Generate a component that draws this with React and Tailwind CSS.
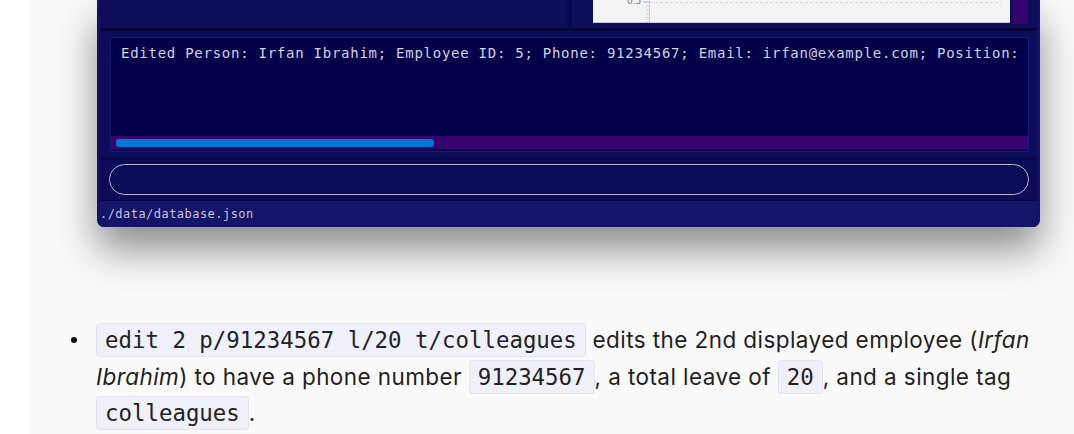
import React from "react";

function Chart() {
  const ticks = [6, 10, 14, 18, 22];
  return (
    <svg width="417" height="23" viewBox="0 0 417 23" className="block">
      <rect x="0" y="0" width="417" height="23" fill="#f4f4f4" />
      <text x="34" y="4" fontSize="9" fill="#777" fontFamily="DejaVu Sans, sans-serif">0.5</text>
      <line x1="50" y1="2" x2="56" y2="2" stroke="#aaa" strokeWidth="1" />
      {ticks.map((t) => (
        <line key={t} x1="53" y1={t} x2="56" y2={t} stroke="#ccc" strokeWidth="1" />
      ))}
      <line x1="56.5" y1="0" x2="56.5" y2="23" stroke="#ccc" strokeWidth="1" />
      <line x1="57" y1="2.5" x2="408" y2="2.5" stroke="#d6d6d6" strokeWidth="1" strokeDasharray="3 2" />
      <line x1="0" y1="22.5" x2="417" y2="22.5" stroke="#c8c8e0" strokeWidth="1" />
    </svg>
  );
}

function Code({ children }) {
  return (
    <code className="font-['DejaVu_Sans_Mono',monospace] text-[22.4px] leading-none tracking-normal bg-[#f0f0fb] border border-[#e3e3ef] rounded-[4px] px-[8px] py-[3px] text-[#222]">
      {children}
    </code>
  );
}

export default function App() {
  return (
    <div className="w-[1074px] h-[434px] overflow-hidden bg-white flex">
      <div className="w-[29px] shrink-0 bg-white" />
      <div className="flex-1 bg-[#fafafa] flex flex-col">
        {/* App window */}
        <div className="ml-[68px] w-[943px] h-[227px] bg-[#121264] px-[3px] rounded-b-[7px] shadow-[0_22px_40px_rgba(0,0,0,0.45)] flex flex-col overflow-hidden">
          {/* top panels */}
          <div className="h-[28px] flex bg-[#0d0d5c]">
            <div className="w-[467px] bg-[#0d0d5c]" />
            <div className="w-[5px] bg-[#08084a]" />
            <div className="flex-1 flex pl-[21px]">
              <div className="h-[23px]">
                <Chart />
              </div>
              <div className="ml-[3px] w-[15px] h-[24px] bg-[#36036f]" />
            </div>
          </div>
          <div className="h-[3px] bg-[#06063f]" />
          {/* result display */}
          <div className="h-[126px] bg-[#0c0c5a] pt-[6px] pl-[10px] pr-[8px]">
            <div className="h-[115px] border border-[#18187a] bg-[#03004a] flex flex-col">
              <div className="flex-1 pl-[10px] pt-[5px] overflow-hidden whitespace-nowrap font-['DejaVu_Sans_Mono',monospace] text-[14px] leading-[20px] tracking-[0.74px] text-[#d2d2e2]">
                Edited Person: Irfan Ibrahim; Employee ID: 5; Phone: 91234567; Email: irfan@example.com; Position:
              </div>
              <div className="h-[13px] mb-[2px] bg-[#36036f] pl-[5px] pt-[3px]">
                <div className="w-[318px] h-[8px] rounded-[3px] bg-[#0078d2]" />
              </div>
            </div>
          </div>
          <div className="h-[3px] bg-[#07074a]" />
          {/* command box */}
          <div className="h-[40px] bg-[#0b0b58] pt-[4px] pl-[9px] pr-[8px]">
            <div className="h-[31px] rounded-full border border-[#b6b6cc] bg-[#0b0b58]" />
          </div>
          <div className="h-[1px] bg-[#07074a]" />
          {/* status bar */}
          <div className="flex-1 bg-[#141468] pt-[5px] font-['DejaVu_Sans_Mono',monospace] text-[12px] leading-[16px] tracking-[0.46px] text-[#c6c6dc]">
            ./data/database.json
          </div>
        </div>

        {/* list */}
        <div className="mt-[95px] ml-[38px] flex">
          <div className="w-[29px] shrink-0 pt-[15px] pl-[4px]">
            <div className="w-[6px] h-[6px] rounded-full bg-[#111]" />
          </div>
          <p className="w-[955px] font-['Inter',sans-serif] text-[22.5px] tracking-[0.42px] leading-[36.5px] text-[#1f1f1f]">
            <Code>edit 2 p/91234567 l/20 t/colleagues</Code> edits the 2nd displayed employee (<em>Irfan Ibrahim</em>) to have a phone number <Code>91234567</Code>, a total leave of <Code>20</Code>, and a single tag <Code>colleagues</Code>.
          </p>
        </div>
      </div>
    </div>
  );
}
